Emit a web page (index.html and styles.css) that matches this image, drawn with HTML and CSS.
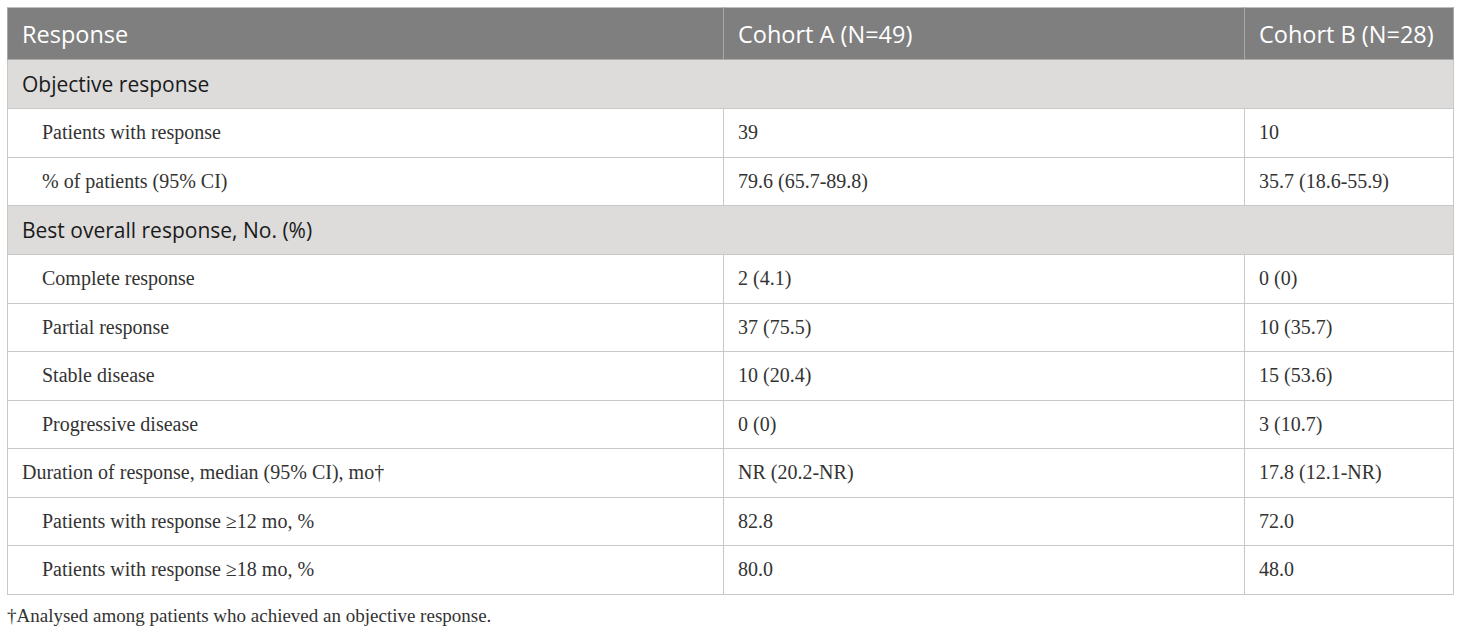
FILE: index.html
```html
<!DOCTYPE html>
<html>
<head>
<meta charset="utf-8">
<link rel="stylesheet" href="styles.css">
</head>
<body>
<div class="wrap">
<table class="tbl">
  <colgroup><col class="c1"><col class="c2"><col class="c3"></colgroup>
  <thead>
    <tr class="head"><th>Response</th><th>Cohort A (N=49)</th><th>Cohort B (N=28)</th></tr>
  </thead>
  <tbody>
    <tr class="sec"><td colspan="3">Objective response</td></tr>
    <tr><td class="ind">Patients with response</td><td>39</td><td>10</td></tr>
    <tr><td class="ind">% of patients (95% CI)</td><td>79.6 (65.7-89.8)</td><td>35.7 (18.6-55.9)</td></tr>
    <tr class="sec"><td colspan="3">Best overall response, No. (%)</td></tr>
    <tr><td class="ind">Complete response</td><td>2 (4.1)</td><td>0 (0)</td></tr>
    <tr><td class="ind">Partial response</td><td>37 (75.5)</td><td>10 (35.7)</td></tr>
    <tr><td class="ind">Stable disease</td><td>10 (20.4)</td><td>15 (53.6)</td></tr>
    <tr><td class="ind">Progressive disease</td><td>0 (0)</td><td>3 (10.7)</td></tr>
    <tr><td>Duration of response, median (95% CI), mo†</td><td>NR (20.2-NR)</td><td>17.8 (12.1-NR)</td></tr>
    <tr><td class="ind">Patients with response ≥12 mo, %</td><td>82.8</td><td>72.0</td></tr>
    <tr><td class="ind">Patients with response ≥18 mo, %</td><td>80.0</td><td>48.0</td></tr>
  </tbody>
</table>
<p class="note">†Analysed among patients who achieved an objective response.</p>
</div>
</body>
</html>
```
FILE: styles.css
```css
html, body { margin: 0; padding: 0; background: #fff; }
.wrap { padding: 7px 8px 0 7px; }
.tbl {
  width: 1446px;
  border-collapse: collapse;
  table-layout: fixed;
  font-family: "Liberation Serif", "DejaVu Serif", serif;
  font-size: 20px;
  color: #333;
}
.c1 { width: 716px; }
.c2 { width: 521px; }
.c3 { width: 209px; }
.tbl th, .tbl td {
  border: 1px solid #c8c8c8;
  padding: 0 14px;
  text-align: left;
  height: 47.5px;
  white-space: nowrap;
}
.head th {
  background: #7f7f7f;
  color: #fff;
  font-family: "Open Sans", "Noto Sans", sans-serif;
  font-weight: 400;
  font-size: 23.5px;
  height: 51px;
  border-color: #a8a8a8;
  border-top-color: #bdbdbd;
}
.sec td {
  background: #dddcda;
  font-family: "Open Sans", "Noto Sans", sans-serif;
  font-size: 21px;
  color: #1a1a1a;
  height: 48px;
}
.tbl td.ind { padding-left: 34px; }
.note {
  margin: 10px 0 0 0;
  font-family: "Liberation Serif", "DejaVu Serif", serif;
  font-size: 19px;
  color: #333;
}
```
